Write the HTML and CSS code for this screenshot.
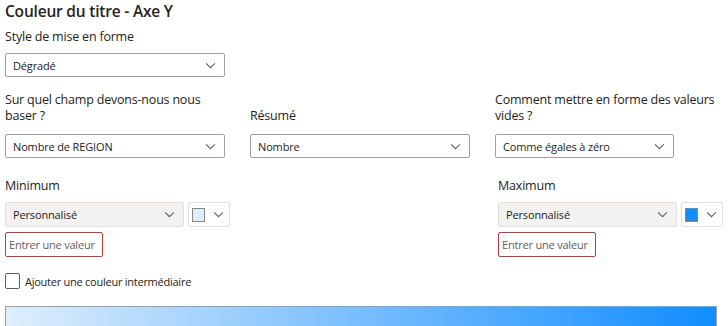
FILE: index.html
```html
<!DOCTYPE html>
<html lang="fr">
<head>
    <meta charset="UTF-8">
    <meta name="viewport" content="width=device-width, initial-scale=1.0">
    <title>Couleur du titre - Axe Y</title>
    <link rel="stylesheet" href="styles.css">
</head>
<body>
    <div class="panel">
        <h1 class="title">Couleur du titre - Axe Y</h1>

        <div class="field">
            <label class="label">Style de mise en forme</label>
            <div class="select select-wide">
                <span>Dégradé</span>
                <svg class="chevron" viewBox="0 0 12 8"><path d="M1 1.5 L6 6.5 L11 1.5" /></svg>
            </div>
        </div>

        <div class="row">
            <div class="col col-a">
                <label class="label">Sur quel champ devons-nous nous baser ?</label>
                <div class="select">
                    <span>Nombre de REGION</span>
                    <svg class="chevron" viewBox="0 0 12 8"><path d="M1 1.5 L6 6.5 L11 1.5" /></svg>
                </div>
            </div>
            <div class="col col-b">
                <label class="label">Résumé</label>
                <div class="select">
                    <span>Nombre</span>
                    <svg class="chevron" viewBox="0 0 12 8"><path d="M1 1.5 L6 6.5 L11 1.5" /></svg>
                </div>
            </div>
            <div class="col col-c">
                <label class="label">Comment mettre en forme des valeurs vides ?</label>
                <div class="select">
                    <span>Comme égales à zéro</span>
                    <svg class="chevron" viewBox="0 0 12 8"><path d="M1 1.5 L6 6.5 L11 1.5" /></svg>
                </div>
            </div>
        </div>

        <div class="range">
            <div class="bound">
                <label class="label">Minimum</label>
                <div class="bound-controls">
                    <div class="select select-grey">
                        <span>Personnalisé</span>
                        <svg class="chevron" viewBox="0 0 12 8"><path d="M1 1.5 L6 6.5 L11 1.5" /></svg>
                    </div>
                    <div class="swatch-picker">
                        <span class="swatch swatch-light"></span>
                        <svg class="chevron" viewBox="0 0 12 8"><path d="M1 1.5 L6 6.5 L11 1.5" /></svg>
                    </div>
                </div>
                <input class="value-input" type="text" placeholder="Entrer une valeur">
            </div>
            <div class="bound">
                <label class="label">Maximum</label>
                <div class="bound-controls">
                    <div class="select select-grey">
                        <span>Personnalisé</span>
                        <svg class="chevron" viewBox="0 0 12 8"><path d="M1 1.5 L6 6.5 L11 1.5" /></svg>
                    </div>
                    <div class="swatch-picker">
                        <span class="swatch swatch-dark"></span>
                        <svg class="chevron" viewBox="0 0 12 8"><path d="M1 1.5 L6 6.5 L11 1.5" /></svg>
                    </div>
                </div>
                <input class="value-input" type="text" placeholder="Entrer une valeur">
            </div>
        </div>

        <label class="check">
            <span class="checkbox"></span>
            <span class="check-text">Ajouter une couleur intermédiaire</span>
        </label>

        <div class="gradient"></div>
    </div>
</body>
</html>
```

FILE: styles.css
```css
* {
    margin: 0;
    padding: 0;
    box-sizing: border-box;
    font-family: "Open Sans", "Noto Sans", sans-serif;
}
body {
    background: #ffffff;
    color: #252423;
    overflow: hidden;
}
.panel {
    padding: 0 12px 0 5px;
}
.title {
    font-size: 15.5px;
    font-weight: 600;
    line-height: 20px;
    padding-top: 1px;
    letter-spacing: -0.2px;
}
.label {
    display: block;
    font-size: 12.5px;
    line-height: 16px;
    letter-spacing: -0.2px;
}
.field {
    margin-top: 8px;
}
.field .label {
    margin-bottom: 8px;
}
.select {
    display: flex;
    align-items: center;
    justify-content: space-between;
    height: 24px;
    padding: 0 8px 0 7px;
    border: 1px solid #a19f9d;
    border-radius: 2px;
    font-size: 11px;
    letter-spacing: -0.15px;
    background: #fff;
}
.select-wide {
    width: 220px;
}
.chevron {
    width: 11px;
    height: 7px;
    fill: none;
    stroke: #605e5c;
    stroke-width: 1.2;
}
/* Zeile mit drei Auswahlfeldern */
.row {
    display: flex;
    gap: 25px;
    margin-top: 15px;
}
.col {
    display: flex;
    flex-direction: column;
    justify-content: flex-end;
}
.col .label {
    margin-bottom: 10px;
}
.col-a, .col-b {
    width: 220px;
}
.col-c {
    width: 179px;
}
.col-c .label {
    width: 230px;
}
/* Minimum / Maximum */
.range {
    display: grid;
    grid-template-columns: 493px 1fr;
    margin-top: 20px;
}
.bound .label {
    margin-bottom: 8px;
}
.bound-controls {
    display: flex;
    gap: 4px;
}
.select-grey {
    width: 179px;
    height: 25px;
    background: #f3f2f1;
    border-color: #e1dfdd;
}
.swatch-picker {
    display: flex;
    align-items: center;
    justify-content: space-between;
    width: 42px;
    height: 25px;
    padding: 0 5px 0 3px;
    border: 1px solid #e1dfdd;
    border-radius: 2px;
}
.swatch {
    width: 13px;
    height: 14px;
    border: 1px solid #8a8886;
}
.swatch-light {
    background: #deeefc;
}
.swatch-dark {
    background: #118dff;
}
.value-input {
    display: block;
    width: 98px;
    height: 25px;
    margin-top: 5px;
    padding: 0 3px;
    border: 1px solid #d13438;
    border-radius: 2px;
    font-size: 11px;
    letter-spacing: -0.2px;
    outline: none;
}
.value-input::placeholder {
    color: #605e5c;
}
.check {
    display: flex;
    align-items: center;
    gap: 5px;
    margin-top: 16px;
}
.checkbox {
    width: 15px;
    height: 16px;
    border: 1px solid #605e5c;
    border-radius: 2px;
}
.check-text {
    font-size: 11px;
    letter-spacing: -0.25px;
}
.gradient {
    height: 30px;
    margin-top: 17px;
    border: 1px solid #a19f9d;
    border-bottom: none;
    background: linear-gradient(to right, #deeefc, #118dff);
    width: 712px;
}
```
